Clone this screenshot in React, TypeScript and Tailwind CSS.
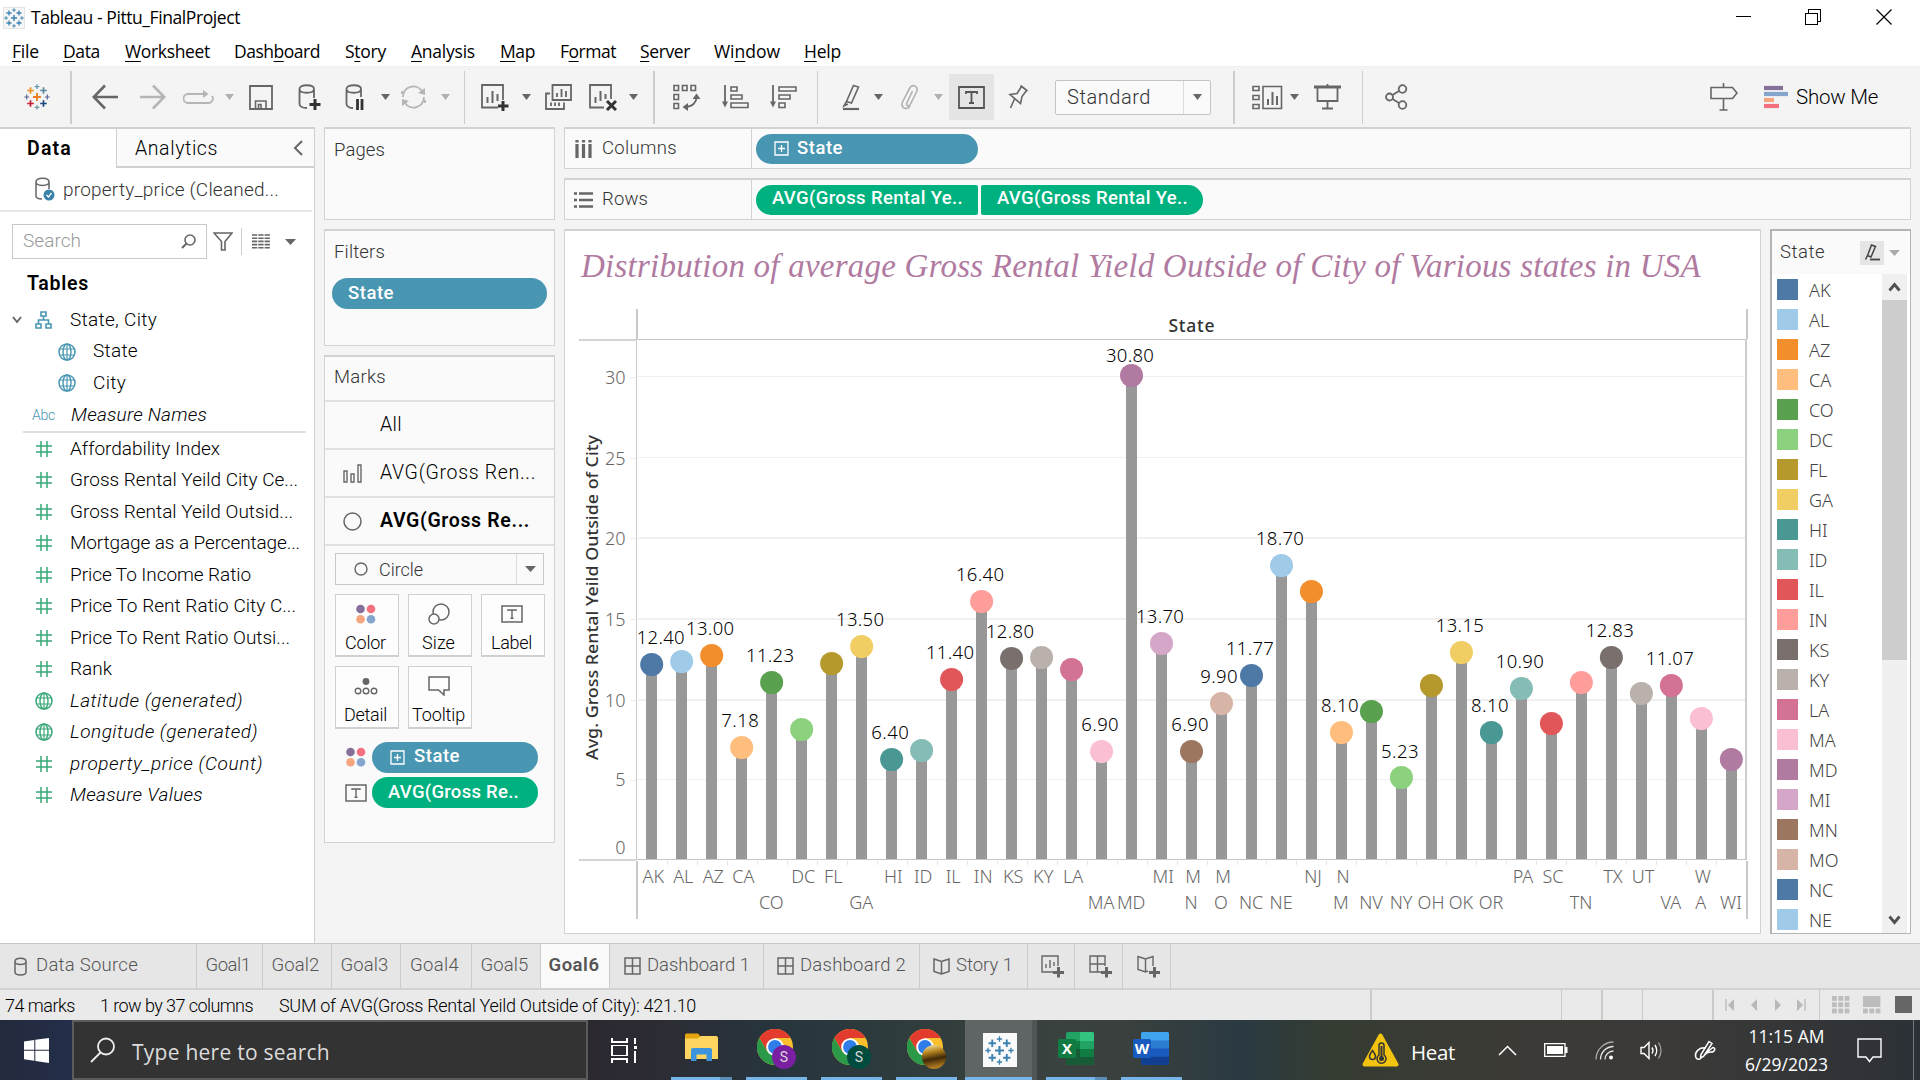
import { useLayoutEffect, useRef, useState } from "react";
import type { ReactNode } from "react";

/* Single-line text whose letter spacing is adjusted so that it fills `w` pixels. */
function Fit({ w, className = "", children }: { w: number; className?: string; children: ReactNode }) {
  const ref = useRef<HTMLSpanElement>(null);
  const [spacing, setSpacing] = useState(0);
  useLayoutEffect(() => {
    const el = ref.current;
    if (!el) return;
    const n = (el.textContent || "").length;
    setSpacing((w - el.getBoundingClientRect().width) / Math.max(1, n));
  }, [w]);
  return (
    <span ref={ref} className={"inline-block shrink-0 whitespace-pre " + className} style={{ letterSpacing: spacing }}>
      {children}
    </span>
  );
}

function Ico({ w, h, className = "", children }: { w: number; h: number; className?: string; children: ReactNode }) {
  return (
    <svg width={w} height={h} viewBox={`0 0 ${w} ${h}`} fill="none" stroke="#666" strokeWidth="1.8" className={"shrink-0 " + className}>
      {children}
    </svg>
  );
}

function Caret({ className = "", color = "#666" }: { className?: string; color?: string }) {
  return (
    <svg width="9" height="6" viewBox="0 0 9 6" className={"shrink-0 " + className}>
      <path d="M0 0H9L4.500 6Z" fill={color} />
    </svg>
  );
}

const plus = (x: number, y: number, r: number, c: string, sw = 2) => (
  <path key={`${x}-${y}`} d={`M${x - r} ${y}H${x + r}M${x} ${y - r}V${y + r}`} stroke={c} strokeWidth={sw} />
);

function TableauMark({ size, mono = false, className = "" }: { size: number; mono?: boolean; className?: string }) {
  const c = (a: string) => (mono ? "#3c82b0" : a);
  return (
    <svg width={size} height={size} viewBox="0 0 26 26" className={"shrink-0 " + className}>
      {plus(13, 13, 4, c("#eb8129"), 1.9)}
      {plus(6.500, 6.500, 3.300, c("#eb9129"), 1.7)}
      {plus(19.500, 6.500, 3.300, c("#59879b"), 1.7)}
      {plus(6.500, 19.500, 3.300, c("#c72035"), 1.7)}
      {plus(19.500, 19.500, 3.300, c("#1f457e"), 1.7)}
      {plus(13, 2.700, 2.400, c("#5b9aa8"), 1.2)}
      {plus(13, 23.300, 2.400, c("#7199a6"), 1.2)}
      {plus(2.700, 13, 2.400, c("#5b6591"), 1.2)}
      {plus(23.300, 13, 2.400, c("#5b6591"), 1.2)}
    </svg>
  );
}

const Sep = ({ className }: { className: string }) => <div className={"h-[53px] w-[1.500px] shrink-0 bg-[#cdcdcd] " + className} />;

const MENUS: [string, string, string, number, string][] = [
  ["", "F", "ile", 27, "ml-3"],
  ["", "D", "ata", 37, "ml-6"],
  ["", "W", "orksheet", 85, "ml-[25px]"],
  ["Dash", "b", "oard", 86, "ml-6"],
  ["S", "t", "ory", 41, "ml-[25px]"],
  ["", "A", "nalysis", 64, "ml-[25px]"],
  ["", "M", "ap", 35, "ml-[25px]"],
  ["F", "o", "rmat", 56, "ml-[25px]"],
  ["", "S", "erver", 50, "ml-6"],
  ["Wi", "n", "dow", 66, "ml-6"],
  ["", "H", "elp", 37, "ml-[24px]"],
];

function TitleAndMenu() {
  return (
    <header className="h-[66px] bg-white font-['Open_Sans',sans-serif] text-black">
      <div className="flex h-[35px] items-center">
        <div className="ml-[3px] flex h-[22px] w-[22px] items-center justify-center border border-[#e4e4e4] bg-[#f6f6f6]">
          <TableauMark size={20} mono />
        </div>
        <Fit w={209} className="ml-[6px] text-[17.500px] leading-none">Tableau - Pittu_FinalProject</Fit>
        <svg width="156" height="16" viewBox="0 0 156 16" className="ml-auto mr-[28px] -mt-0.5" fill="none" stroke="#000" strokeWidth="1.200" shapeRendering="crispEdges">
          <path d="M0 7.500H15" />
          <path d="M69.500 4.500H81.500V15.500H69.500ZM72.500 4V.500H84.500V12.500H82" />
          <path d="M140.500 .500L155.500 15.500M155.500 .500L140.500 15.500" shapeRendering="auto" />
        </svg>
      </div>
      <nav className="flex h-[31px] items-center">
        {MENUS.map(([a, u, b, w, m]) => (
          <Fit key={u + b} w={w} className={"text-[17.500px] leading-[20px] " + m}>
            {a}
            <span className="underline underline-offset-[3px]">{u}</span>
            {b}
          </Fit>
        ))}
      </nav>
    </header>
  );
}

function Toolbar() {
  return (
    <div className="flex h-[61px] items-center border-t border-[#f0f0f0] bg-[#f4f4f4]">
      <TableauMark size={26} className="ml-6" />
      <Sep className="ml-[20px]" />
      <Ico w={26} h={26} className="ml-5"><path d="M26 13H2M13 1.500L1.700 13L13 24.500" strokeWidth="2.600" /></Ico>
      <Ico w={26} h={26} className="ml-[22px]"><path d="M0 13H24M13 1.500L24.300 13L13 24.500" stroke="#b5b5b5" strokeWidth="2.600" /></Ico>
      <Ico w={31} h={16} className="ml-[17px]"><path d="M24 5H5a4 4 0 0 0 0 9H26a4.400 4.400 0 0 0 3-7" stroke="#b5b5b5" /><path d="M20 1L25.500 5L20 9Z" fill="#b5b5b5" stroke="none" /></Ico>
      <Caret className="ml-[11px]" color="#b0b0b0" />
      <Ico w={24} h={25} className="ml-[15px]"><path d="M1 1H23V24H1Z" /><path d="M6.500 24V16H17V24M9.500 24V19.500H12V24" strokeWidth="1.600" /></Ico>
      <Ico w={23} h={27} className="ml-[25px]"><path d="M1.500 5C1.500 0 16 0 16 5C16 10 1.500 10 1.500 5V20C1.500 22.500 5 24 9 24M16 5V14" /><path d="M17 15V26M11.500 20.500H22.500" stroke="#333" strokeWidth="3" /></Ico>
      <Ico w={19} h={27} className="ml-6"><path d="M1.500 5C1.500 0 16 0 16 5C16 10 1.500 10 1.500 5V20C1.500 22.500 5 24 8 24M16 5V13" /><path d="M12.500 15V26M17 15V26" stroke="#333" strokeWidth="2.800" /></Ico>
      <Caret className="ml-[17px]" />
      <Ico w={27} h={26} className="ml-[10px]"><path d="M3 13A10.500 11 0 0 1 22 7M24 13A10.500 11 0 0 1 5 19M2 10V7M25 16V19" stroke="#b5b5b5" /><path d="M25 4V11L18 9ZM2 22V15L9 17Z" fill="#b5b5b5" stroke="none" /></Ico>
      <Caret className="ml-[14px]" color="#b0b0b0" />
      <Sep className="ml-[14px]" />
      <Ico w={28} h={27} className="ml-4"><path d="M17 23.500H1V1H22V16" /><path d="M6.500 19V13M11.500 19V7M16.500 17V10" strokeWidth="2" /><path d="M22 17V27M17 22H27.500" stroke="#333" strokeWidth="3" /></Ico>
      <Caret className="ml-[13px]" />
      <Ico w={27} h={26} className="ml-[14px]"><path d="M7.500 1H26V16H7.500ZM5 9.500H1V25H19V18.500" /><path d="M12 13V9M16.500 13V5M21 13V7M6 22V18.500M10 22V18.500M14 22V18.500" /></Ico>
      <Ico w={28} h={27} className="ml-[17px]"><path d="M15 23.500H1V1H22V15" /><path d="M6.500 19V13M11.500 17V7M16.500 15V10" strokeWidth="2" /><path d="M18 17L27 26M27 17L18 26" stroke="#333" strokeWidth="3" /></Ico>
      <Caret className="ml-[12px]" />
      <Sep className="ml-[15px]" />
      <Ico w={28} h={27} className="ml-[18px]"><path d="M1 1.500H5.500V6.500H1ZM9.500 1.500H14V6.500H9.500ZM18 1.500H22.500V6.500H18ZM1 10.500H5.500V15.500H1ZM1 19.500H5.500V24.500H1Z" strokeWidth="1.600" /><path d="M13 23C20 22.500 23.500 18 23.500 13" /><path d="M19.500 15L23.500 9.500L27.500 15ZM15 19L9.500 23L15 27Z" fill="#666" stroke="none" /></Ico>
      <Ico w={27} h={24} className="ml-[21px]"><path d="M3 0V18" /><path d="M0 16.500L3 22.500L6 16.500Z" fill="#666" stroke="none" /><path d="M9 2H15V6H9ZM9 10H20V14H9ZM9 18H26V22.500H9Z" strokeWidth="1.600" /></Ico>
      <Ico w={27} h={24} className="ml-[21px]"><path d="M3 0V18" /><path d="M0 16.500L3 22.500L6 16.500Z" fill="#666" stroke="none" /><path d="M9 2H26V6H9ZM9 10H20V14H9ZM9 18H15V22.500H9Z" strokeWidth="1.600" /></Ico>
      <Sep className="ml-[20px]" />
      <Ico w={19} h={27} className="ml-6"><path d="M11.500 1.500L16.500 3L9.500 19L4.500 17.500ZM4.500 17.500L2 22L6 20" strokeWidth="1.600" /><path d="M1 25H17" strokeWidth="2.200" /></Ico>
      <Caret className="ml-[13px]" />
      <Ico w={19} h={26} className="ml-[17px]"><path d="M12.500 7L7 18.500C5.500 22 9 23 10.500 20L16.500 8C19 2.500 12.500 -1 9.500 4.500L3 17C-.500 24 7 27 10 22" stroke="#b0b0b0" strokeWidth="1.600" /></Ico>
      <Caret className="ml-[15px]" color="#b0b0b0" />
      <div className="ml-[6px] flex h-[46px] w-[45px] shrink-0 items-center justify-center bg-[#e5e5e5]">
        <Ico w={27} h={23}><path d="M1 1H26V22H1Z" stroke="#555" /><path d="M8 8V6H19V8M13.500 6V17M11 17H16" stroke="#555" /></Ico>
      </div>
      <Ico w={21} h={26} className="ml-[14px]"><path d="M12.500 1.500L19.500 7M13.500 2.500L9 9.500L2 10.500L12.500 19.500L14 12.500L18.500 6.500M6.500 15L2.500 24" strokeWidth="1.600" /></Ico>
      <div className="ml-[26px] flex h-[35px] w-[156px] shrink-0 items-center rounded-[2px] border border-[#c4c4c4] bg-[#fafafa]">
        <Fit w={84} className="ml-[11px] text-[20px] font-light text-[#333]">Standard</Fit>
        <div className="ml-auto flex h-full w-[27px] items-center justify-center border-l border-[#dcdcdc]"><Caret /></div>
      </div>
      <Sep className="ml-[22px]" />
      <Ico w={31} h={25} className="ml-[17px]"><path d="M1 1.500H7V5.500H1ZM1 10.500H7V14.500H1ZM1 19.500H7V23.500H1ZM11 1.500H29.500V23.500H11Z" strokeWidth="1.600" /><path d="M16 20V14M20.500 20V7M25 20V11" strokeWidth="2" /></Ico>
      <Caret className="ml-[7px]" />
      <Ico w={27} h={26} className="ml-[15px]"><path d="M0 3H27" strokeWidth="3" /><path d="M3.500 4V17H23.500V4M13.500 0V2M13.500 17V24M8 24.500H19" /></Ico>
      <Sep className="ml-[21px]" />
      <Ico w={23} h={26} className="ml-[22px]"><circle cx="4.500" cy="13" r="3.500" /><circle cx="17.500" cy="5" r="3.800" /><circle cx="17.500" cy="21" r="3.800" /><path d="M7.500 11L14 7M7.500 15L14 19" /></Ico>
      <Ico w={28} h={28} className="ml-auto"><path d="M1 4.500H22.500L27 10L22.500 15.500H1ZM13.500 0V4.500M13.500 15.500V27M9.500 27H17.500" strokeWidth="1.600" /></Ico>
      <Ico w={24} h={24} className="ml-[26px]">
        <path d="M0 3H19" stroke="#85709a" strokeWidth="4.200" /><path d="M0 9H24" stroke="#85a5cc" strokeWidth="4.200" /><path d="M0 15H10" stroke="#f5a67f" strokeWidth="4.200" /><path d="M0 21H15" stroke="#f5707e" strokeWidth="4.200" />
      </Ico>
      <Fit w={82} className="ml-2 mr-[42px] text-[20.500px] font-light text-black">Show Me</Fit>
    </div>
  );
}

const BLUE = "#4996b2";
const GREEN = "#3aa878";

function FieldIcon({ kind }: { kind: string }) {
  if (kind === "abc") return <Fit w={23} className="-ml-[3px] -mr-1 text-[14px] text-[#4996b2]">Abc</Fit>;
  if (kind === "num")
    return <Ico w={16} h={16}><path d="M0 5H16M0 11H16M5 0V16M11 0V16" stroke={GREEN} strokeWidth="1.500" /></Ico>;
  if (kind === "tree")
    return <Ico w={17} h={18}><path d="M6 1H11V5H6ZM1 13H6V17H1ZM11 13H16V17H11ZM8.500 5V9M3.500 13V9H13.500V13" stroke={BLUE} strokeWidth="1.600" /></Ico>;
  const c = kind === "geo-g" ? GREEN : BLUE;
  return (
    <Ico w={18} h={18}>
      <circle cx="9" cy="9" r="8" stroke={c} strokeWidth="1.500" />
      <ellipse cx="9" cy="9" rx="4" ry="8" stroke={c} strokeWidth="1.400" />
      <path d="M9 1V17M1.500 6H16.500M1.500 12H16.500" stroke={c} strokeWidth="1.200" />
    </Ico>
  );
}

const FIELDS: [string, string, number, boolean][] = [
  ["num", "Affordability Index", 150, false],
  ["num", "Gross Rental Yeild City Ce...", 228, false],
  ["num", "Gross Rental Yeild Outsid...", 223, false],
  ["num", "Mortgage as a Percentage...", 230, false],
  ["num", "Price To Income Ratio", 181, false],
  ["num", "Price To Rent Ratio City C...", 226, false],
  ["num", "Price To Rent Ratio Outsi...", 220, false],
  ["num", "Rank", 42, false],
  ["geo-g", "Latitude (generated)", 173, true],
  ["geo-g", "Longitude (generated)", 188, true],
  ["num", "property_price (Count)", 193, true],
  ["num", "Measure Values", 133, true],
];

function DataPane() {
  return (
    <aside className="flex w-[315px] shrink-0 flex-col border-r border-t-2 border-[#d0d0d0] bg-white text-[19px] font-light text-black">
      <div className="flex h-[39px]">
        <div className="w-[116px] pl-[27px] pt-[5px]"><Fit w={45} className="text-[19.500px] font-semibold">Data</Fit></div>
        <div className="flex flex-1 items-center border-b-2 border-l border-[#d0d0d0] bg-[#fafafa] pl-[18px] pr-[11px]">
          <Fit w={83} className="mt-0.5 text-[19.500px]">Analytics</Fit>
          <Ico w={10} h={16} className="ml-auto"><path d="M9 1L2 8L9 15" strokeWidth="2" /></Ico>
        </div>
      </div>
      <div className="mr-0.5 flex h-[44px] items-center border-b-2 border-[#e6e6e6] pl-[35px]">
        <Ico w={20} h={24}>
          <path d="M1 5C1 0 14 0 14 5C14 9.500 1 9.500 1 5V19C1 21 4 22 7 22M14 5V12" strokeWidth="1.500" />
          <circle cx="14" cy="18" r="5.500" fill="#3a82a8" stroke="none" /><path d="M11.500 18L13.500 20L16.500 16" stroke="#fff" strokeWidth="1.300" />
        </Ico>
        <Fit w={216} className="ml-2 mt-0.5 text-[#333]">property_price (Cleaned...</Fit>
      </div>
      <div className="mt-[12px] flex h-[35px] items-center">
        <div className="ml-3 flex h-[35px] w-[195px] items-center border border-[#c8c8c8] pl-[10px] pr-[10px]">
          <Fit w={58} className="text-[#999]">Search</Fit>
          <Ico w={15} h={15} className="ml-auto"><circle cx="9" cy="6" r="5" strokeWidth="1.600" /><path d="M5.500 9.500L1 14" strokeWidth="2" /></Ico>
        </div>
        <Ico w={20} h={19} className="ml-[6px]"><path d="M1 1H19L12 9.500V18H8.500V9.500Z" strokeWidth="1.600" /></Ico>
        <div className="ml-2 h-[27px] w-px bg-[#cfcfcf]" />
        <Ico w={18} h={15} className="ml-[10px]"><path d="M0 1H18M0 4.200H18M0 7.400H18M0 10.600H18M0 13.800H18" strokeWidth="1.600" strokeDasharray="5.300 1" /></Ico>
        <svg width="11" height="6" viewBox="0 0 11 6" className="ml-[15px]"><path d="M0 0H11L5.500 6Z" fill="#666" /></svg>
      </div>
      <Fit w={62} className="ml-[27px] mt-[11px] self-start text-[19.500px] font-semibold leading-7">Tables</Fit>
      <div className="mt-[6px] flex h-[32px] items-center pl-3">
        <Ico w={10} h={8}><path d="M1 1L5 6L9 1" strokeWidth="2" /></Ico>
        <div className="ml-[13px]"><FieldIcon kind="tree" /></div>
        <Fit w={87} className="ml-[18px]">State, City</Fit>
      </div>
      <div className="flex h-[31px] items-center pl-[58px]"><FieldIcon kind="geo" /><Fit w={45} className="ml-[17px]">State</Fit></div>
      <div className="flex h-[32px] items-center pl-[58px]"><FieldIcon kind="geo" /><Fit w={33} className="ml-[17px]">City</Fit></div>
      <div className="ml-[23px] mr-2 flex h-[34px] items-center border-b-2 border-[#e0e0e0] pl-3">
        <FieldIcon kind="abc" /><Fit w={136} className="ml-[20px] italic">Measure Names</Fit>
      </div>
      {FIELDS.map(([k, t, w, it]) => (
        <div key={t} className="flex h-[31.500px] shrink-0 items-center">
          <div className="ml-[35px] mr-[17px] flex w-[18px] justify-center"><FieldIcon kind={k} /></div>
          <Fit w={w} className={it ? "italic" : ""}>{t}</Fit>
        </div>
      ))}
    </aside>
  );
}

const card = "border border-t-2 border-[#d2d2d2] bg-[#fafafa]";

function PlusBox() {
  return <Ico w={15} h={15}><path d="M1 1H14V14H1ZM7.500 4V11M4 7.500H11" stroke="#fff" strokeWidth="1.300" /></Ico>;
}
function LabelIcon() {
  return <Ico w={22} h={18}><path d="M1 1H21V17H1Z" strokeWidth="1.500" /><path d="M7 6V5H15V6M11 5V13M9.500 13.300H12.500" strokeWidth="1.400" /></Ico>;
}
function ColorIcon() {
  return (
    <Ico w={20} h={20}>
      <g stroke="none"><circle cx="4.500" cy="5" r="4.300" fill="#85709a" /><circle cx="15" cy="5" r="4.300" fill="#f5707e" /><circle cx="4.500" cy="15.300" r="4.300" fill="#f5a67f" /><circle cx="15" cy="15.300" r="4.300" fill="#85a5cc" /></g>
    </Ico>
  );
}
function MarkButton({ label, w, children }: { label: string; w: number; children: ReactNode }) {
  return (
    <div className="flex h-[63px] w-[64px] flex-col items-center border border-b-2 border-[#d0d0d0] bg-[#fdfdfd] pr-[3px]">
      <div className="flex h-[38px] items-center">{children}</div>
      <Fit w={w} className="text-[18px] leading-5">{label}</Fit>
    </div>
  );
}

function Cards() {
  return (
    <div className="ml-[9px] flex w-[231px] shrink-0 flex-col gap-[9px] text-[18.500px] font-light text-[#333]">
      <div className={"h-[93px] pl-[9px] pt-[8px] " + card}><Fit w={51}>Pages</Fit></div>
      <div className={"flex h-[117px] flex-col " + card}>
        <Fit w={51} className="ml-[9px] mt-[7px] self-start leading-7">Filters</Fit>
        <div className="mx-[7px] mt-[12px] flex h-[31px] items-center rounded-full bg-[#4996b2] pl-4 text-white"><Fit w={46} className="font-medium">State</Fit></div>
      </div>
      <div className={"h-[488px] " + card}>
        <div className="h-[45px] border-b-2 border-[#e0e0e0] pl-[9px] pt-[7px]"><Fit w={52}>Marks</Fit></div>
        <div className="flex h-[48px] items-center border-b-2 border-[#e0e0e0] pl-[55px] text-black"><Fit w={22} className="text-[19.500px]">All</Fit></div>
        <div className="flex h-[48px] items-center border-b-2 border-[#e0e0e0] pl-[18px] text-black">
          <Ico w={19} h={19}><path d="M1 7H4V18H1ZM8 10H11V18H8ZM15 1H18V18H15Z" strokeWidth="1.400" /></Ico>
          <Fit w={156} className="ml-[18px] text-[19.500px]">AVG(Gross Ren...</Fit>
        </div>
        <div className="flex h-[48px] items-center border-b-2 border-[#e0e0e0] pl-[18px] text-black">
          <Ico w={19} h={19}><circle cx="9.500" cy="9.500" r="8.500" strokeWidth="1.500" /></Ico>
          <Fit w={150} className="ml-[18px] text-[19.500px] font-semibold">AVG(Gross Re...</Fit>
        </div>
        <div className="mx-[10px] mt-[7px] flex h-[32px] items-center border border-[#c8c8c8] pl-[18px]">
          <Ico w={14} h={14}><circle cx="7" cy="7" r="6" strokeWidth="1.400" /></Ico>
          <Fit w={44} className="ml-[11px] text-[18px]">Circle</Fit>
          <div className="ml-auto flex h-full w-[27px] items-center justify-center border-l border-[#dcdcdc]"><svg width="11" height="6" viewBox="0 0 11 6"><path d="M0 0H11L5.500 6Z" fill="#666" /></svg></div>
        </div>
        <div className="ml-[10px] mt-[9px] grid w-[210px] grid-cols-3 gap-x-[9px] gap-y-[9px] text-black">
          <MarkButton label="Color" w={41}><ColorIcon /></MarkButton>
          <MarkButton label="Size" w={33}><Ico w={22} h={22}><circle cx="13" cy="9" r="8" strokeWidth="1.500" /><circle cx="6" cy="16" r="5" fill="#fdfdfd" strokeWidth="1.500" /></Ico></MarkButton>
          <MarkButton label="Label" w={41}><LabelIcon /></MarkButton>
          <MarkButton label="Detail" w={43}><Ico w={24} h={18}><circle cx="12" cy="4.500" r="3.400" fill="#666" stroke="none" /><circle cx="4" cy="14" r="2.800" strokeWidth="1.400" /><circle cx="12" cy="14" r="2.800" strokeWidth="1.400" /><circle cx="20" cy="14" r="2.800" strokeWidth="1.400" /></Ico></MarkButton>
          <MarkButton label="Tooltip" w={53}><Ico w={22} h={20}><path d="M1 1H21V14H16V19L10.500 14H1Z" strokeWidth="1.500" /></Ico></MarkButton>
        </div>
        <div className="mt-[13px] flex h-[30px] items-center pl-[21px]">
          <ColorIcon />
          <div className="ml-[6px] flex h-[31px] w-[166px] items-center gap-[9px] rounded-full bg-[#4996b2] pl-[18px] text-white"><PlusBox /><Fit w={46} className="font-medium">State</Fit></div>
        </div>
        <div className="mt-[5px] flex h-[31px] items-center pl-[20px]">
          <LabelIcon />
          <div className="ml-[5px] flex h-[31px] w-[166px] items-center rounded-full bg-[#00b180] pl-4 text-white"><Fit w={131} className="font-medium">AVG(Gross Re..</Fit></div>
        </div>
      </div>
    </div>
  );
}

function Shelves() {
  return (
    <div className="flex flex-col gap-[9px] text-[18.500px]">
      <div className={"flex h-[42px] items-center " + card}>
        <Ico w={17} h={18} className="ml-[10px]"><path d="M2 0V2.500M2 4V18M8.500 0V2.500M8.500 4V18M15 0V2.500M15 4V18" strokeWidth="3.200" /></Ico>
        <Fit w={75} className="ml-[10px] font-light text-[#333]">Columns</Fit>
        <div className="ml-[74px] h-full w-px bg-[#d2d2d2]" />
        <div className="ml-[4px] flex h-[30px] w-[222px] items-center gap-2 rounded-[15px] bg-[#4996b2] pl-[18px] text-white"><PlusBox /><Fit w={46} className="font-medium">State</Fit></div>
      </div>
      <div className={"flex h-[42px] items-center " + card}>
        <Ico w={19} h={16} className="ml-[9px]"><path d="M0 1.500H3M5 1.500H19M0 8H3M5 8H19M0 14.500H3M5 14.500H19" strokeWidth="2.600" /></Ico>
        <Fit w={46} className="ml-[9px] font-light text-[#333]">Rows</Fit>
        <div className="ml-[103px] h-full w-px bg-[#d2d2d2]" />
        <div className="ml-[4px] flex h-[30px] w-[222px] items-center rounded-l-[15px] rounded-r-[2px] bg-[#00b180] pb-0.5 pl-4 text-white"><Fit w={191} className="font-medium">AVG(Gross Rental Ye..</Fit></div>
        <div className="ml-[3px] flex h-[30px] w-[222px] items-center rounded-l-[2px] rounded-r-[15px] bg-[#00b180] pb-0.5 pl-4 text-white"><Fit w={191} className="font-medium">AVG(Gross Rental Ye..</Fit></div>
      </div>
    </div>
  );
}

/* code, colour, mark centre, optional value label with centre offsets, axis label row (3 = wrapped) */
type Mark = { s: string; c: string; y: number; v?: string; dx?: number; dy?: number; row: 1 | 2 | 3 };
const MARKS: Mark[] = [
  { s: "AK", c: "#4e79a7", y: 664.5, v: "12.40", dx: 9, row: 1 },
  { s: "AL", c: "#a0cbe8", y: 661.5, row: 1 },
  { s: "AZ", c: "#f28e2b", y: 655.5, v: "13.00", row: 1 },
  { s: "CA", c: "#ffbe7d", y: 747.5, v: "7.18", row: 1 },
  { s: "CO", c: "#59a14f", y: 682.5, v: "11.23", row: 2 },
  { s: "DC", c: "#8cd17d", y: 729.5, row: 1 },
  { s: "FL", c: "#b6992d", y: 663.5, row: 1 },
  { s: "GA", c: "#f1ce63", y: 646.5, v: "13.50", row: 2 },
  { s: "HI", c: "#499894", y: 759.5, v: "6.40", row: 1 },
  { s: "ID", c: "#86bcb6", y: 750.5, row: 1 },
  { s: "IL", c: "#e15759", y: 679.5, v: "11.40", row: 1 },
  { s: "IN", c: "#ff9d9a", y: 601.5, v: "16.40", row: 1 },
  { s: "KS", c: "#79706e", y: 658.5, v: "12.80", row: 1 },
  { s: "KY", c: "#bab0ac", y: 657.5, row: 1 },
  { s: "LA", c: "#d37295", y: 669.5, row: 1 },
  { s: "MA", c: "#fabfd2", y: 751.5, v: "6.90", row: 2 },
  { s: "MD", c: "#b07aa1", y: 375.5, v: "30.80", dy: -20, row: 2 },
  { s: "MI", c: "#d4a6c8", y: 643.5, v: "13.70", row: 1 },
  { s: "MN", c: "#9d7660", y: 751.5, v: "6.90", row: 3 },
  { s: "MO", c: "#d7b5a6", y: 703.5, v: "9.90", dx: -2.6, row: 3 },
  { s: "NC", c: "#4e79a7", y: 675.5, v: "11.77", row: 2 },
  { s: "NE", c: "#a0cbe8", y: 565.5, v: "18.70", row: 2 },
  { s: "NJ", c: "#f28e2b", y: 591.5, row: 1 },
  { s: "NM", c: "#ffbe7d", y: 732.5, v: "8.10", row: 3 },
  { s: "NV", c: "#59a14f", y: 711.5, row: 2 },
  { s: "NY", c: "#8cd17d", y: 777.5, v: "5.23", dy: -26, row: 2 },
  { s: "OH", c: "#b6992d", y: 685.5, row: 2 },
  { s: "OK", c: "#f1ce63", y: 652.5, v: "13.15", row: 2 },
  { s: "OR", c: "#499894", y: 732.5, v: "8.10", row: 2 },
  { s: "PA", c: "#86bcb6", y: 688.5, v: "10.90", row: 1 },
  { s: "SC", c: "#e15759", y: 723.5, row: 1 },
  { s: "TN", c: "#ff9d9a", y: 682.5, row: 2 },
  { s: "TX", c: "#79706e", y: 657.5, v: "12.83", row: 1 },
  { s: "UT", c: "#bab0ac", y: 693.5, row: 1 },
  { s: "VA", c: "#d37295", y: 685.5, v: "11.07", row: 2 },
  { s: "WA", c: "#fabfd2", y: 718.5, row: 3 },
  { s: "WI", c: "#b07aa1", y: 759.5, row: 2 },
];

function Chart() {
  const cx = (i: number) => 651.7 + i * 29.99;
  return (
    <svg width="1181" height="616" viewBox="572 306 1181 616" className="font-['Noto_Sans',sans-serif] font-light" fontSize="18">
      <g shapeRendering="crispEdges">
        {[779, 699, 618, 537, 457, 376].map((y, i) => (
          <g key={y}>
            <rect x="638" y={y} width="1108" height={i === 0 || i > 3 ? 1 : 2} fill="#f0f0f0" />
            <rect x="630" y={y + 1} width="6" height="1" fill="#ededed" />
          </g>
        ))}
        {MARKS.map((_, i) => i > 0 && <rect key={i} x={Math.round(cx(i) - 15)} y="861" width="1" height="4" fill="#e6e6e6" />)}
        <rect x="636" y="309" width="2" height="30" fill="#c9c9c9" />
        <rect x="1746" y="309" width="2" height="30" fill="#c9c9c9" />
        <rect x="579" y="339" width="57" height="2" fill="#d4d4d4" />
        <rect x="636" y="339" width="1111" height="1" fill="#c6c6c6" />
        <rect x="636" y="339" width="1" height="521" fill="#c9c9c9" />
        <rect x="1745" y="339" width="2" height="521" fill="#cdcdcd" />
      </g>
      {MARKS.map((m, i) => (
        <rect key={m.s} x={Math.round(cx(i) - 5.5)} y={m.y} width="11" height={859 - m.y} fill="#989898" shapeRendering="crispEdges" />
      ))}
      {MARKS.map((m, i) => <circle key={m.s} cx={cx(i)} cy={m.y} r="11.500" fill={m.c} />)}
      <g shapeRendering="crispEdges">
        <rect x="579" y="859" width="57" height="2" fill="#d4d4d4" />
        <rect x="636" y="859" width="1111" height="1" fill="#c6c6c6" />
        <rect x="636" y="861" width="2" height="58" fill="#c9c9c9" />
        <rect x="1746" y="861" width="2" height="58" fill="#c9c9c9" />
      </g>
      <g fill="#000" textAnchor="middle" fontSize="18.500">
        {MARKS.map((m, i) => m.v && (
          <text key={m.s} x={cx(i) + (m.dx ?? -1.6)} y={m.y + (m.dy ?? -27) + 6.5} textLength={m.v.length === 5 ? 48 : 37.5}>{m.v}</text>
        ))}
      </g>
      <g fill="#666" textAnchor="middle">
        {MARKS.map((m, i) =>
          m.row === 3 ? (
            <g key={m.s}>
              <text x={cx(i) + 1.5} y="883">{m.s[0]}</text>
              <text x={cx(i) - 0.5} y="909">{m.s[1]}</text>
            </g>
          ) : (
            <text key={m.s} x={cx(i) + (m.row === 1 ? 1.6 : -0.4)} y={m.row === 1 ? 883 : 909}>{m.s}</text>
          )
        )}
      </g>
      <g fill="#666" textAnchor="end">
        <text x="625.500" y="384">30</text>
        <text x="625.500" y="465">25</text>
        <text x="625.500" y="545">20</text>
        <text x="625.500" y="626">15</text>
        <text x="625.500" y="707">10</text>
        <text x="625.500" y="786">5</text>
        <text x="625.500" y="854">0</text>
      </g>
      <text x="1191.500" y="331.500" textAnchor="middle" textLength="46" fontSize="17.500" className="fill-[#333] font-medium">State</text>
      <text transform="translate(598 760) rotate(-90)" textLength="325" lengthAdjust="spacingAndGlyphs" fontSize="15.500" className="fill-[#333] font-medium">Avg. Gross Rental Yeild Outside of City</text>
    </svg>
  );
}

function Legend() {
  return (
    <div className="ml-[9px] flex w-[141px] shrink-0 flex-col border border-l-2 border-t-2 border-[#b4b4b4] bg-white">
      <div className="flex h-[43px] items-center bg-[#fafafa]">
        <Fit w={45} className="ml-[8px] text-[18.500px] font-light text-[#333]">State</Fit>
        <div className="ml-[35px] flex h-6 w-6 items-center justify-center bg-[#e5e5e5]">
          <Ico w={16} h={17}><path d="M7.500 1L11.500 2.500L7 13L3.500 11.500ZM3.500 11.500L1.500 15.500" stroke="#444" strokeWidth="1.500" /><path d="M6 15.500H16" stroke="#444" strokeWidth="1.800" /></Ico>
        </div>
        <svg width="11" height="6" viewBox="0 0 11 6" className="ml-[5px]"><path d="M0 0H11L5.500 6Z" fill="#aaa" /></svg>
      </div>
      <div className="flex min-h-0 flex-1">
        <div className="flex-1 overflow-hidden pl-[5px] pt-[5px] font-['Noto_Sans',sans-serif] text-[18px] font-light leading-none text-[#444]">
          {MARKS.slice(0, 22).map((m) => (
            <div key={m.s} className="flex h-[30px] items-start">
              <div className="h-[21px] w-[21px]" style={{ backgroundColor: m.c }} />
              <span className="ml-[11px] pt-[2px]">{m.s}</span>
            </div>
          ))}
        </div>
        <div className="mr-[3px] flex w-[25px] flex-col items-center bg-[#f0f0f0]">
          <Ico w={13} h={10} className="my-2"><path d="M1.500 8.500L6.500 2.500L11.500 8.500" stroke="#505050" strokeWidth="2.800" /></Ico>
          <div className="h-[360px] w-full bg-[#cdcdcd]" />
          <Ico w={13} h={10} className="mb-2 mt-auto"><path d="M1.500 1.500L6.500 7.500L11.500 1.500" stroke="#505050" strokeWidth="2.800" /></Ico>
        </div>
      </div>
    </div>
  );
}

const tab = "flex h-full shrink-0 items-center border-r-[1.500px] border-[#cbcbcb]";
const DashIcon = () => <Ico w={17} h={18}><path d="M1 1H16V17H1ZM8.500 1V17M1 9H16" strokeWidth="1.500" /></Ico>;
const StoryIcon = () => <Ico w={17} h={18}><path d="M1 2L8.500 4.500L16 2V14.500L8.500 17L1 14.500ZM8.500 4.500V17" strokeWidth="1.500" /></Ico>;

function SheetTabs() {
  const goals: [string, string, number][] = [
    ["Goal1", "w-[66px]", 45], ["Goal2", "w-[69px]", 48], ["Goal3", "w-[69px]", 48], ["Goal4", "w-[71px]", 49], ["Goal5", "w-[69px]", 48],
  ];
  return (
    <div className="flex h-[47px] shrink-0 items-center border-b-2 border-t border-b-[#d2d2d2] border-t-[#c8c8c8] bg-[#e6e6e6] text-[18.500px] font-light text-[#555]">
      <div className={tab + " w-[197px] pl-[14px]"}>
        <Ico w={13} h={19}><path d="M1 4.500C1 0 12 0 12 4.500C12 8.500 1 8.500 1 4.500V15C1 19 12 19 12 15V4.500" strokeWidth="1.500" /></Ico>
        <Fit w={102} className="ml-[9px]">Data Source</Fit>
      </div>
      {goals.map(([g, cls, w]) => <div key={g} className={tab + " justify-center pr-[3px] " + cls}><Fit w={w}>{g}</Fit></div>)}
      <div className={tab + " w-[69px] justify-center bg-[#fafafa] pr-[2px]"}><Fit w={51} className="font-semibold">Goal6</Fit></div>
      <div className={tab + " w-[154px] gap-[6px] pl-[14px]"}><DashIcon /><Fit w={103}>Dashboard 1</Fit></div>
      <div className={tab + " w-[156px] gap-[6px] pl-[13px]"}><DashIcon /><Fit w={106}>Dashboard 2</Fit></div>
      <div className={tab + " w-[108px] gap-[6px] pl-[13px]"}><StoryIcon /><Fit w={57}>Story 1</Fit></div>
      <div className={tab + " w-[47px] justify-center pl-[2px]"}><Ico w={23} h={23}><path d="M12 17H1V1H17V11" strokeWidth="1.400" /><path d="M5 13V9M9 13V5M13 11V7" strokeWidth="1.400" /><path d="M17.500 12V22.500M12 17.500H23" strokeWidth="3" /></Ico></div>
      <div className={tab + " w-[48px] justify-center pl-[3px]"}><Ico w={23} h={23}><path d="M12 17H1V1H16V11M8.500 1V17M1 9H16" strokeWidth="1.400" /><path d="M17.500 12V22.500M12 17.500H23" strokeWidth="3" /></Ico></div>
      <div className={tab + " w-[48px] justify-center pl-[3px]"}><Ico w={23} h={23}><path d="M11 16L8.500 17L1 14.500V1.500L8.500 4L16 1.500V11M8.500 4V17" strokeWidth="1.400" /><path d="M17.500 12V22.500M12 17.500H23" strokeWidth="3" /></Ico></div>
    </div>
  );
}

function StatusBar() {
  const s = "h-full w-[1.500px] bg-[#cacaca] ";
  return (
    <div className="flex h-[30px] shrink-0 items-center bg-[#eaeaea] text-[18px] font-light text-black">
      <Fit w={70} className="ml-[5px]">74 marks</Fit>
      <Fit w={153} className="ml-[25px]">1 row by 37 columns</Fit>
      <Fit w={417} className="ml-[26px]">SUM of AVG(Gross Rental Yeild Outside of City): 421.10</Fit>
      <div className="ml-auto flex h-full w-[550px] items-center">
        <div className={s} />
        <div className={s + "ml-[189px]"} />
        <div className={s + "ml-[39px]"} />
        <div className={s + "ml-[39px]"} />
        <div className={s + "ml-[69px]"} />
        <Ico w={81} h={12} className="ml-[11px]"><path d="M1 0V12" stroke="#b8b8b8" strokeWidth="1.300" /><path d="M80 0V12" stroke="#b8b8b8" strokeWidth="1.300" /><path d="M9 0L3 6L9 12ZM32 0L26 6L32 12ZM50 0L56 6L50 12ZM72 0L78 6L72 12Z" fill="#b8b8b8" stroke="none" /></Ico>
        <div className={s + "ml-[13px]"} />
        <Ico w={82} h={18} className="ml-[12px]">
          <g fill="#bdbdbd" stroke="none">
            {[0, 6.3, 12.6].map((x) => [0, 6.3, 12.6].map((y) => <rect key={`${x}-${y}`} x={x} y={y} width="4.800" height="4.800" />))}
            <rect x="31" y="0" width="17.400" height="11" />
            {[31, 37.3, 43.6].map((x) => <rect key={x} x={x} y="12.600" width="4.800" height="4.800" />)}
          </g>
          <rect x="63" y="0" width="17" height="17" fill="#666" stroke="none" />
        </Ico>
      </div>
    </div>
  );
}

function Chrome({ badge, letter }: { badge: string; letter: string }) {
  return (
    <svg width="40" height="40" viewBox="0 0 40 40" className="shrink-0">
      <circle cx="18" cy="18" r="18" fill="#fbc02d" />
      <path d="M18 9H33.600A18 18 0 0 0 2.400 9L10.200 22.500Z" fill="#e33b2e" />
      <path d="M2.400 9A18 18 0 0 0 18 36L25.800 22.500L18 26L10.200 22.500Z" fill="#2a9a48" />
      <circle cx="18" cy="18" r="8.800" fill="#fff" />
      <circle cx="18" cy="18" r="6.900" fill="#2f7de8" />
      {letter === "" && (
        <defs>
          <linearGradient id="photo" x1="0" y1="0" x2="0.200" y2="1">
            <stop offset="0" stopColor="#fff0b0" /><stop offset="0.350" stopColor="#b58420" /><stop offset="0.650" stopColor="#402808" /><stop offset="1" stopColor="#b07c20" />
          </linearGradient>
        </defs>
      )}
      <circle cx="27" cy="28" r="12" fill={badge} />
      <text x="27" y="33" textAnchor="middle" fontSize="14" fill="#d8d8d8" className="font-['Roboto',sans-serif]">{letter}</text>
    </svg>
  );
}

function Office({ letter, c }: { letter: string; c: string[] }) {
  return (
    <svg width="36" height="33" viewBox="0 0 36 33" className="mr-0.5 shrink-0">
      <rect x="8" y="0" width="28" height="33" rx="2" fill={c[1]} />
      {letter === "X" ? (
        <>
          <path d="M22 0H34a2 2 0 0 1 2 2V9H22Z" fill={c[0]} /><path d="M8 9H22V17H8Z" fill={c[2]} /><path d="M22 17H36V25H22Z" fill={c[2]} /><path d="M8 17H22V25H36V31a2 2 0 0 1-2 2H10a2 2 0 0 1-2-2Z" fill={c[3]} />
        </>
      ) : (
        <>
          <path d="M8 2a2 2 0 0 1 2-2H34a2 2 0 0 1 2 2V8.500H8Z" fill={c[0]} /><rect x="8" y="16.500" width="28" height="8" fill={c[2]} /><path d="M8 24.500H36V31a2 2 0 0 1-2 2H10a2 2 0 0 1-2-2Z" fill={c[3]} />
        </>
      )}
      <rect x="0" y="7" width="18" height="19" rx="1.500" fill={c[4]} />
      <text x="9" y="22" textAnchor="middle" fontSize="15" fontWeight="700" fill="#fff" className="font-['Open_Sans',sans-serif]">{letter}</text>
    </svg>
  );
}

function TaskItem({ m, w, active, stacked, children }: { m: string; w: string; active?: boolean; stacked?: boolean; children: ReactNode }) {
  return (
    <div className={"flex h-full shrink-0 flex-col items-center " + m + " " + w + (active ? " border-r-[5px] border-[#505655] bg-[#5f6564]" : "")}>
      <div className="flex flex-1 items-center justify-center">{children}</div>
      <div className="flex h-[3px] w-full bg-[#76b5e8]">{stacked && <div className="ml-auto w-3 bg-[#5c8db8]" />}</div>
    </div>
  );
}

function Taskbar() {
  return (
    <footer className="flex h-[60px] shrink-0 items-center bg-[linear-gradient(90deg,#232a3c_0px,#242e4a_72px,#2b2830_588px,#2c2c34_660px,#27353d_780px,#333f3d_960px,#3a4240_1060px,#39403e_1130px,#2a3a42_1240px,#353c32_1330px,#3c3a36_1520px,#3a3938_1700px,#2c3137_1919px)] font-['Open_Sans',sans-serif] text-white">
      <svg width="25" height="25" viewBox="0 0 25 25" className="ml-6" fill="#fff"><path d="M0 3.500L10.300 2V11.800H0ZM11.300 1.800L25 0V11.800H11.300ZM0 12.800H10.300V22.800L0 21.300ZM11.300 12.800H25V25L11.300 23Z" /></svg>
      <div className="ml-[23px] flex h-full w-[516px] items-center border-2 border-[#5b5b5b] bg-[#333]">
        <Ico w={26} h={26} className="ml-4"><circle cx="16" cy="9.500" r="8" stroke="#eee" /><path d="M10.500 15.500L1 25" stroke="#eee" /></Ico>
        <Fit w={198} className="ml-[16px] mt-1 text-[21px] leading-none text-[#dcdcdc]">Type here to search</Fit>
      </div>
      <svg width="26" height="25" viewBox="0 0 26 25" className="ml-[23px]" fill="none" stroke="#fff" strokeWidth="1.500" shapeRendering="crispEdges">
        <path d="M1 0V4H16V0M1 7.500H16V17.500H1ZM1 25V21H16V25M24 0V6M24 13V25" /><rect x="23" y="8" width="2.500" height="3" fill="#fff" stroke="none" />
      </svg>
      <TaskItem m="ml-[34px]" w="w-[61px]" stacked>
        <svg width="33" height="31" viewBox="0 0 33 31"><path d="M0 2a1.500 1.500 0 0 1 1.500-1.500H13L16 4H31a2 2 0 0 1 2 2V26H0Z" fill="#e5a50f" /><path d="M0 5.500H13L16 3H31a2 2 0 0 1 2 2V26H0Z" fill="#ffd562" /><path d="M6 28V17a2 2 0 0 1 2-2H25a2 2 0 0 1 2 2V28H21.500V21.500H11.500V28Z" fill="#3b94dc" /></svg>
      </TaskItem>
      <TaskItem m="ml-[14px]" w="w-[61px]"><Chrome badge="#7a1fa2" letter="S" /></TaskItem>
      <TaskItem m="ml-[14px]" w="w-[61px]"><Chrome badge="#004d40" letter="S" /></TaskItem>
      <TaskItem m="ml-[14px]" w="w-[61px]"><Chrome badge="url(#photo)" letter="" /></TaskItem>
      <TaskItem m="ml-[8px]" w="w-[72px]" active><div className="ml-0.5 mt-[3px] flex h-[34px] w-[34px] items-center justify-center bg-[#fafafa]"><TableauMark size={29} mono /></div></TaskItem>
      <TaskItem m="ml-[9px]" w="w-[61px]" stacked><Office letter="X" c={["#33c481", "#21a366", "#107c41", "#185c37", "#107c41"]} /></TaskItem>
      <TaskItem m="ml-[14px]" w="w-[61px]"><Office letter="W" c={["#41a5ee", "#2b7cd3", "#185abd", "#103f91", "#185abd"]} /></TaskItem>

      <svg width="37" height="34" viewBox="0 0 37 34" className="ml-[180px] shrink-0">
        <path d="M18.500 2.500L34.500 31.500H2.500Z" fill="#f2c40f" stroke="#f2c40f" strokeWidth="4" strokeLinejoin="round" />
        <path d="M17 12.500a2.500 2.500 0 0 1 5 0V22a4.500 4.500 0 1 1-5 0Z" fill="none" stroke="#333" strokeWidth="1.500" />
        <path d="M19.500 13V25" stroke="#333" strokeWidth="2" /><circle cx="19.500" cy="25.500" r="2.500" fill="#333" />
        <path d="M10.500 17.500C8 21 7.500 22 7.500 23.500a3 3 0 0 0 6 0C13.500 22 13 21 10.500 17.500Z" fill="none" stroke="#333" strokeWidth="1.500" />
      </svg>
      <Fit w={44} className="ml-3 mt-1 text-[20.500px] leading-none">Heat</Fit>
      <Ico w={19} h={11} className="ml-[43px]"><path d="M1 10L9.500 1.500L18 10" stroke="#fff" strokeWidth="1.500" /></Ico>
      <Ico w={24} h={14} className="ml-[27px]"><path d="M.700 .700H21V13.300H.700Z" stroke="#fff" strokeWidth="1.300" /><path d="M3 3H19V11H3ZM21 4H23.500V10H21Z" fill="#fff" stroke="none" /></Ico>
      <Ico w={19} h={19} className="ml-[27px]"><g stroke="#e8e8e8" strokeWidth="1.300"><path d="M1 18.500A17.500 17.500 0 0 1 18.500 1" stroke="#aaa" /><path d="M5.500 18.500A13 13 0 0 1 18.500 5.500M10 18.500A8.500 8.500 0 0 1 18.500 10" /></g><circle cx="16" cy="16.500" r="2" fill="#fff" stroke="none" /></Ico>
      <Ico w={23} h={19} className="ml-[26px]"><path d="M1 6.500H4L9 1.500V17.500L4 12.500H1Z" stroke="#fff" strokeWidth="1.400" /><path d="M12 6.500Q14 9.500 12 12.500M15 4Q18.500 9.500 15 15" stroke="#fff" strokeWidth="1.400" /><path d="M18.500 1.500Q23.500 9.500 18.500 17.500" stroke="#999" strokeWidth="1.400" /></Ico>
      <Ico w={22} h={22} className="ml-[31px]"><path d="M15 2.500L18 4.500L9.500 17.500L6.500 19L7 15.500ZM12 9C5 8 1 13 1.500 17C2 21 6 21 7 19M13 13L19 8.500C22 9 21 13 17 13C15 13 12 14 11 16" stroke="#fff" strokeWidth="1.500" /></Ico>
      <div className="ml-[28px] flex w-[85px] flex-col items-center gap-[10px] text-[17.500px] leading-[18px]">
        <Fit w={76}>11:15 AM</Fit>
        <Fit w={83}>6/29/2023</Fit>
      </div>
      <Ico w={25} h={25} className="ml-[28px]"><path d="M1 1H24V19H16L12.500 23.500L9 19H1Z" stroke="#fff" strokeWidth="1.400" /></Ico>
      <div className="ml-auto mr-[6px] h-full w-px bg-[#777]" />
    </footer>
  );
}

export default function App() {
  return (
    <div className="flex h-[1080px] w-[1920px] flex-col overflow-hidden bg-[#f4f4f4] font-['Roboto',sans-serif]">
      <TitleAndMenu />
      <Toolbar />
      <div className="flex h-[816px] shrink-0">
        <DataPane />
        <Cards />
        <div className="ml-[9px] flex w-[1347px] flex-col gap-[9px]">
          <Shelves />
          <div className="flex h-[705px]">
            <div className="w-[1197px] shrink-0 border border-t-2 border-[#d2d2d2] bg-white pl-[7px]">
              <div className="flex h-[75px] items-center pb-[5px] pl-[9px]">
                <Fit w={1120} className="font-['Liberation_Serif',serif] text-[33px] italic leading-none text-[#b07aa1]">
                  Distribution of average Gross Rental Yield Outside of City of Various states in USA
                </Fit>
              </div>
              <Chart />
            </div>
            <Legend />
          </div>
        </div>
      </div>
      <SheetTabs />
      <StatusBar />
      <Taskbar />
    </div>
  );
}
